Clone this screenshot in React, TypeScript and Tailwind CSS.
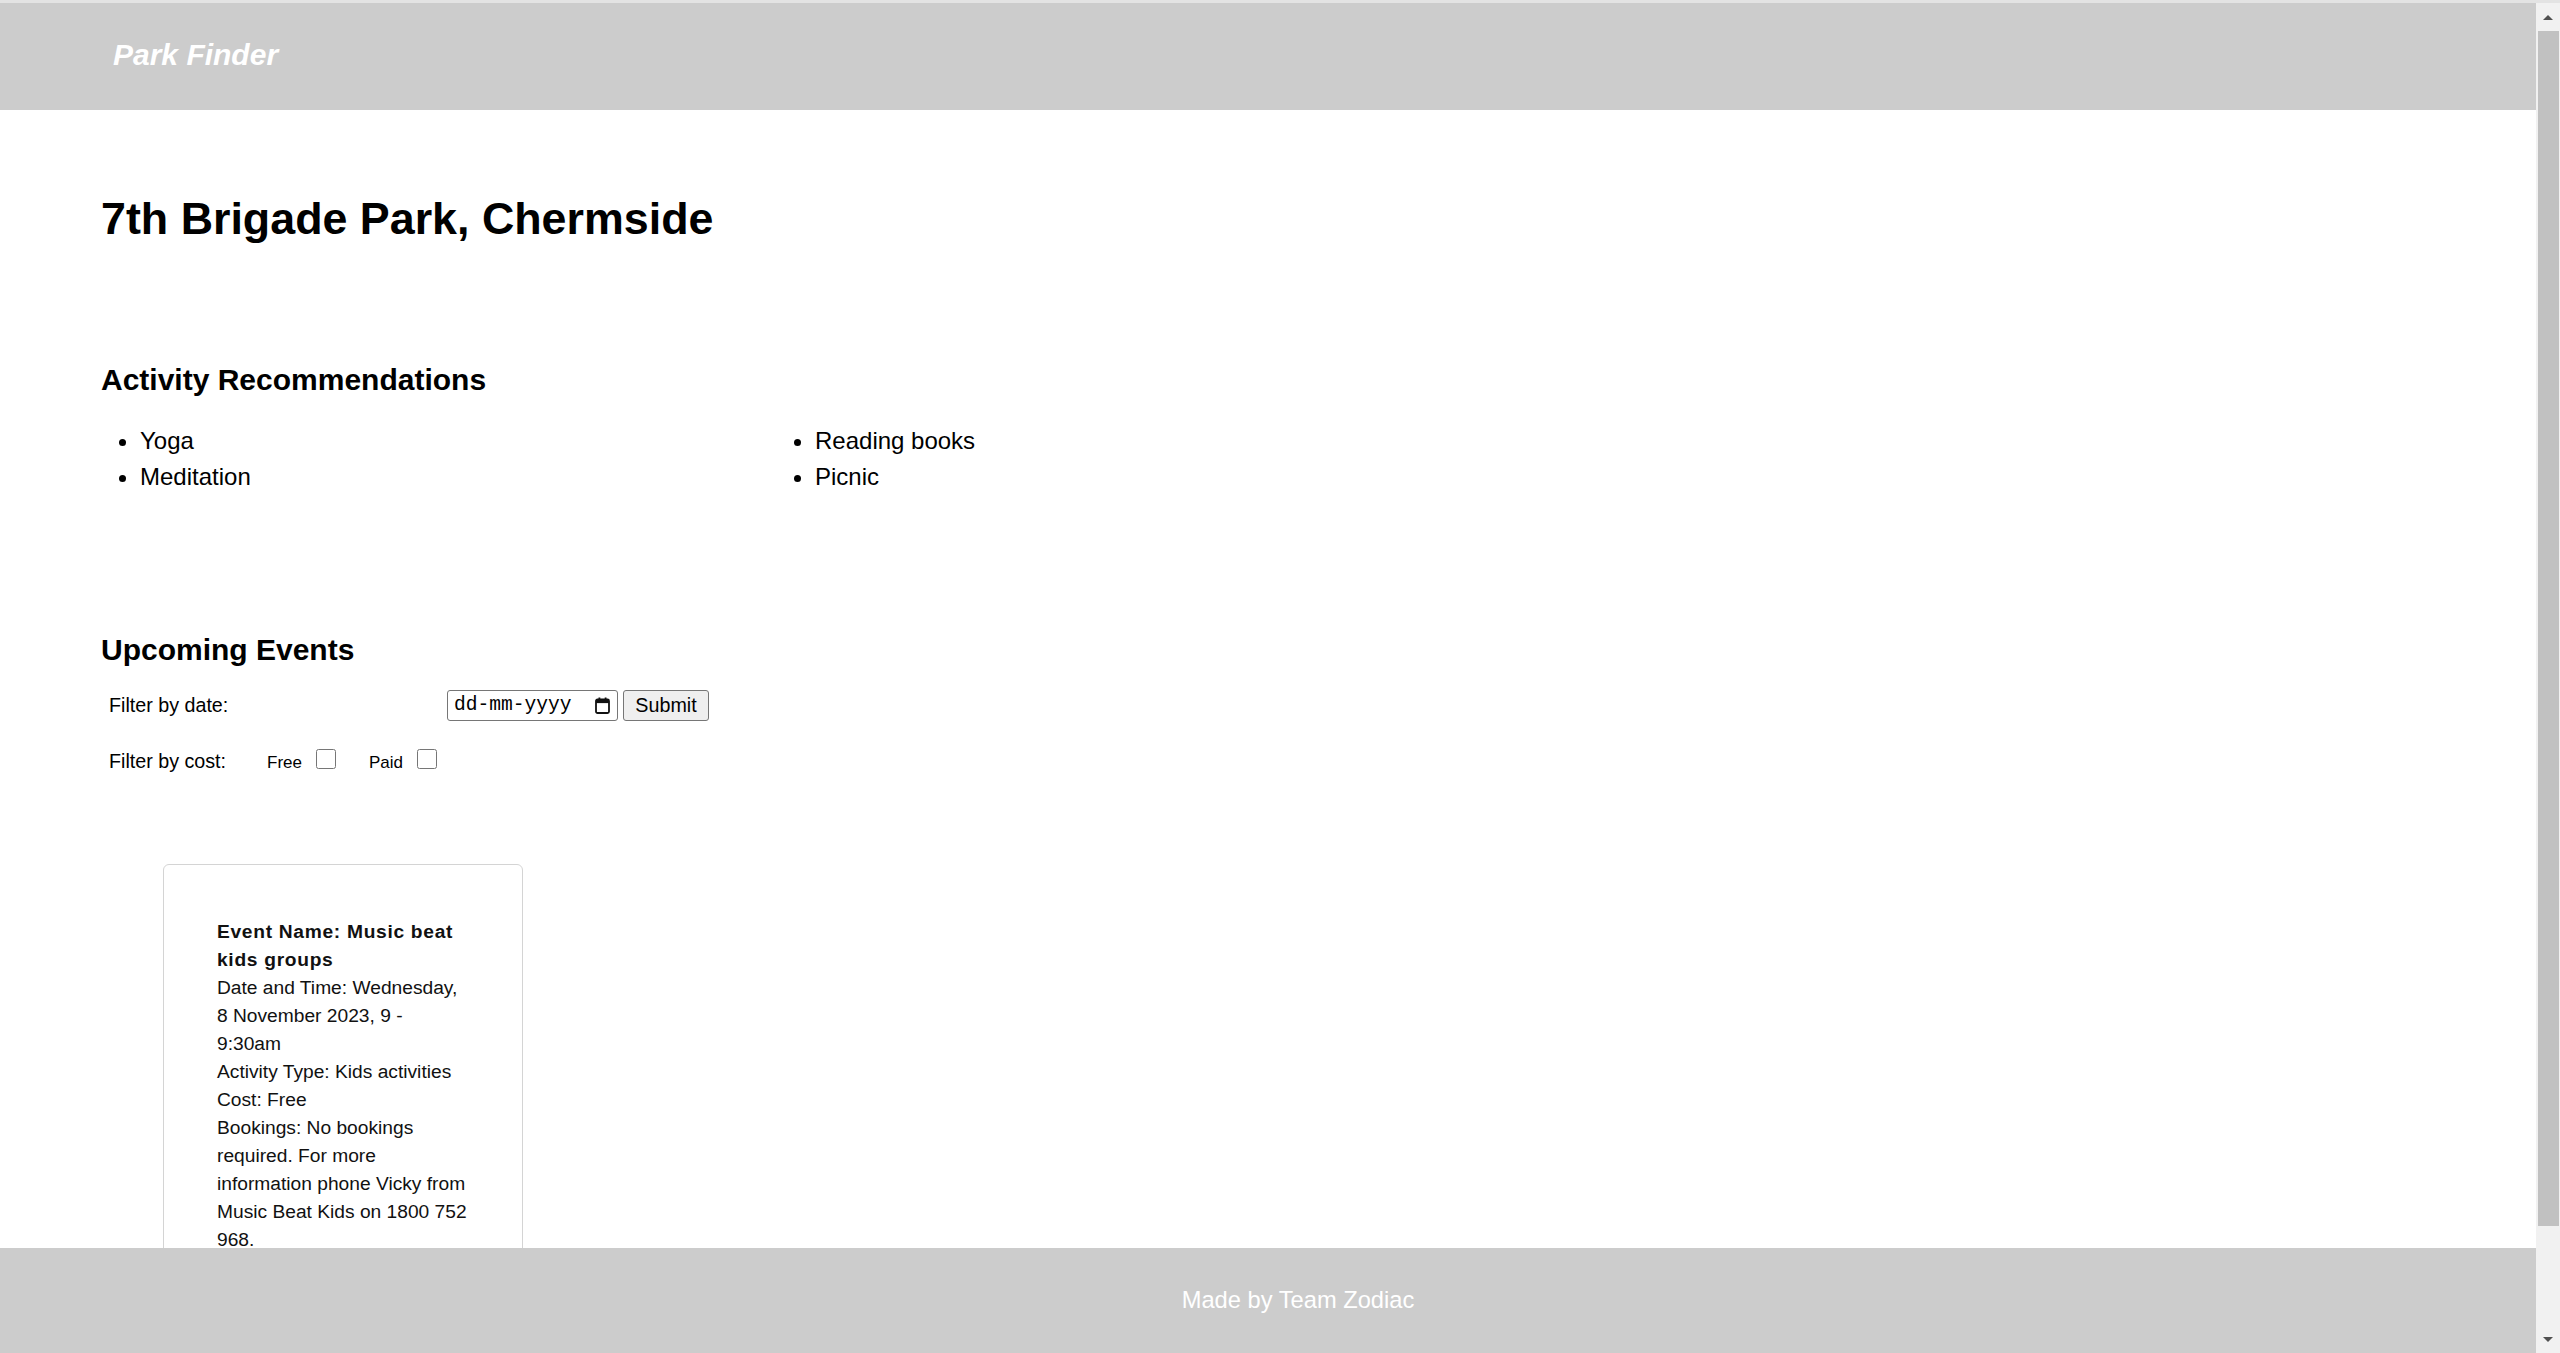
const activityColumns = [
  ["Yoga", "Meditation"],
  ["Reading books", "Picnic"],
];

const CalendarIcon = () => (
  <svg width="15" height="17" viewBox="0 0 15 17">
    <rect x="1" y="2.5" width="13" height="13.5" rx="1.5" fill="none" stroke="#111" strokeWidth="1.8" />
    <rect x="1" y="2.5" width="13" height="3.6" fill="#111" />
    <rect x="3.5" y="0.5" width="1.8" height="3" fill="#111" />
    <rect x="9.7" y="0.5" width="1.8" height="3" fill="#111" />
  </svg>
);

const EventCard = () => {
  return (
    <div className="ml-[62px] mt-[91px] w-[360px] shrink-0 rounded-[6px] border border-[#d4d4d4] p-[53px] text-[19.2px] leading-[28px] text-[#111]">
      <p className="font-bold tracking-[0.7px]">Event Name: Music beat kids groups</p>
      <p>Date and Time: Wednesday, 8 November 2023, 9 - 9:30am</p>
      <p>Activity Type: Kids activities</p>
      <p>Cost: Free</p>
      <p>
        Bookings: No bookings required. For more information phone Vicky from
        Music Beat Kids on 1800 752 968.
      </p>
    </div>
  );
};

const Scrollbar = () => (
  <div className="flex w-[24px] shrink-0 flex-col bg-[#f1f1f1]">
    <div className="flex h-[28px] items-center justify-center">
      <div className="h-0 w-0 border-x-[5.5px] border-b-[5.5px] border-x-transparent border-b-[#505050]" />
    </div>
    <div className="ml-[2px] h-[1195px] w-[21px] bg-[#c1c1c1]" />
    <div className="flex-1" />
    <div className="flex h-[28px] items-center justify-center">
      <div className="h-0 w-0 border-x-[5.5px] border-t-[5.5px] border-x-transparent border-t-[#505050]" />
    </div>
  </div>
);

const App = () => {
  return (
    <div className="flex h-screen flex-col overflow-hidden bg-white font-['Liberation_Sans',Arial,sans-serif] text-black">
      <div className="h-[3px] shrink-0 bg-[#e3e3e3]" />
      <div className="flex min-h-0 flex-1">
        <div className="flex min-w-0 flex-1 flex-col">
          <header className="flex h-[107px] shrink-0 items-center bg-[#cccccc] pb-[3px] pl-[113px]">
            <p className="text-[30px] font-bold italic leading-[36px] text-white">Park Finder</p>
          </header>

          <main className="flex min-h-0 flex-1 flex-col overflow-hidden pl-[101px] pt-[82px]">
            <h1 className="text-[44.8px] font-bold leading-[52px]">
              7th Brigade Park, Chermside
            </h1>

            <h2 className="mt-[119px] text-[30px] font-bold leading-[34px]">
              Activity Recommendations
            </h2>
            <div className="mt-[25.5px] flex">
              {activityColumns.map((col, i) => (
                <ul key={i} className="w-[675px] list-disc pl-[39px] text-[24px] leading-[36px]">
                  {col.map((item) => (
                    <li key={item}>{item}</li>
                  ))}
                </ul>
              ))}
            </div>

            <h2 className="mt-[138px] text-[30px] font-bold leading-[34px]">
              Upcoming Events
            </h2>
            <div className="mt-[23px] flex h-[31px] items-center pl-[8px] text-[19.7px] leading-[24px]">
              <label className="w-[338px]">Filter by date:</label>
              <div className="flex h-[31px] w-[171px] items-center justify-between rounded-[3px] border border-[#767676] pl-[6px] pr-[7px]">
                <span className="font-['Liberation_Mono',monospace] text-[19.6px] leading-[24px]">
                  dd-mm-yyyy
                </span>
                <CalendarIcon />
              </div>
              <button className="ml-[5px] h-[31px] w-[86px] rounded-[3px] border border-[#767676] bg-[#efefef] text-[19.7px]">
                Submit
              </button>
            </div>
            <div className="mt-[28px] flex h-[24px] items-start pl-[8px]">
              <label className="mt-[1px] w-[158px] text-[19.7px] leading-[22px]">
                Filter by cost:
              </label>
              <span className="mt-[3px] text-[17px] leading-[22px]">Free</span>
              <input type="checkbox" className="ml-[14px] h-[20px] w-[20px]" />
              <span className="ml-[33px] mt-[3px] text-[17px] leading-[22px]">Paid</span>
              <input type="checkbox" className="ml-[14px] h-[20px] w-[20px]" />
            </div>

            <EventCard />
          </main>

          <footer className="flex h-[105px] shrink-0 items-center justify-center bg-[#cccccc] pl-[60px]">
            <p className="text-[23.7px] text-white">Made by Team Zodiac</p>
          </footer>
        </div>
        <Scrollbar />
      </div>
    </div>
  );
};

export default App;
